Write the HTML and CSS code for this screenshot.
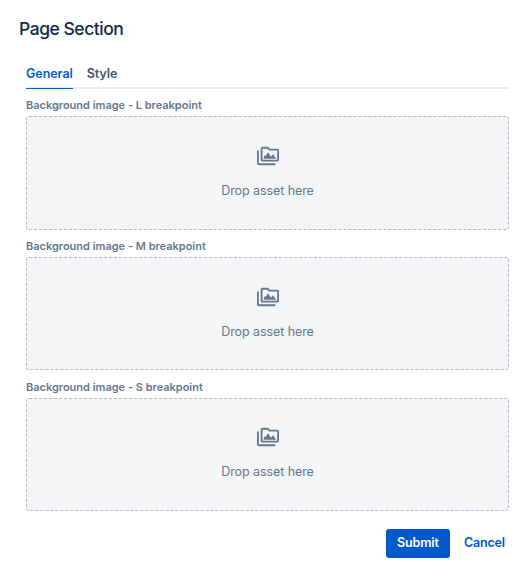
FILE: index.html
```html
<!DOCTYPE html>
<html lang="en">
<head>
<meta charset="utf-8">
<title>Page Section</title>
<link rel="stylesheet" href="styles.css">
</head>
<body>
<svg width="0" height="0" class="defs" aria-hidden="true">
<symbol id="assets" viewBox="0 0 24 24"><path d="M22 4h-8l-2-2H6c-1.100 0-1.990.9-1.990 2L4 16c0 1.100.9 2 2 2h16c1.100 0 2-.9 2-2V6c0-1.100-.9-2-2-2zm0 12H6V4h5.170l2 2H22v10zM2 6H0v14c0 1.100.9 2 2 2h18v-2H2V6z"/><path d="M7 15h14l-3.500-5-2.200 2.700L12 8l-2.600 4-1-1z"/></symbol>
</svg>
<main class="dialog">
<h1 class="title">Page Section</h1>
<nav class="tabs"><a class="tab active">General</a><a class="tab">Style</a></nav>
<form class="fields">
<section class="field"><label class="label">Background image - L breakpoint</label><div class="drop"><svg class="icon"><use href="#assets"/></svg><span class="hint">Drop asset here</span></div></section>
<section class="field"><label class="label">Background image - M breakpoint</label><div class="drop"><svg class="icon"><use href="#assets"/></svg><span class="hint">Drop asset here</span></div></section>
<section class="field"><label class="label">Background image - S breakpoint</label><div class="drop"><svg class="icon"><use href="#assets"/></svg><span class="hint">Drop asset here</span></div></section>
</form>
<footer class="actions"><button class="submit">Submit</button><button class="cancel">Cancel</button></footer>
</main>
</body>
</html>
```

FILE: styles.css
```css
* { box-sizing: border-box; }
body { margin: 0; background: #fff; font-family: Inter, sans-serif; color: #172b4d; }
.defs { display: none; }
.dialog { padding: 17px 23px 0 26px; }
.title { margin: 0 0 0 -7px; font-size: 17.5px; line-height: 24px; font-weight: 500; letter-spacing: -0.47px; color: #10294a; }
.tabs { display: flex; gap: 14px; height: 25px; margin-top: 23px; border-bottom: 2px solid #ebecf0; }
.tab { height: 25px; padding-top: 1px; font-size: 12.5px; line-height: 18px; font-weight: 600; letter-spacing: -0.05px; color: #42526e; }
.tab.active { color: #0060ca; border-bottom: 1px solid #0060ca; }
.fields { margin: 0; padding-top: 8.3px; }
.field { height: 140.8px; }
.label { display: block; height: 19px; font-size: 11px; line-height: 16px; font-weight: 600; letter-spacing: -0.01px; color: #65788f; }
.drop { display: flex; flex-direction: column; align-items: center; height: 113.3px; padding-top: 27.5px; border: 1px dashed #b3bac5; border-radius: 3px; background: #f3f5f7; color: #65788f; }
.icon { width: 22px; height: 22px; fill: currentColor; }
.hint { margin-top: 15px; font-size: 12.5px; line-height: 18px; letter-spacing: -0.08px; }
.actions { display: flex; justify-content: flex-end; gap: 14px; margin-top: 9.3px; padding-right: 4px; }
button { height: 29px; padding: 0 0 2px; border: 0; border-radius: 3px; font: 600 12.5px/27px Inter, sans-serif; letter-spacing: -0.15px; }
.submit { width: 64px; color: #fff; background: #0059ca; }
.cancel { background: none; color: #0059ca; }
```
